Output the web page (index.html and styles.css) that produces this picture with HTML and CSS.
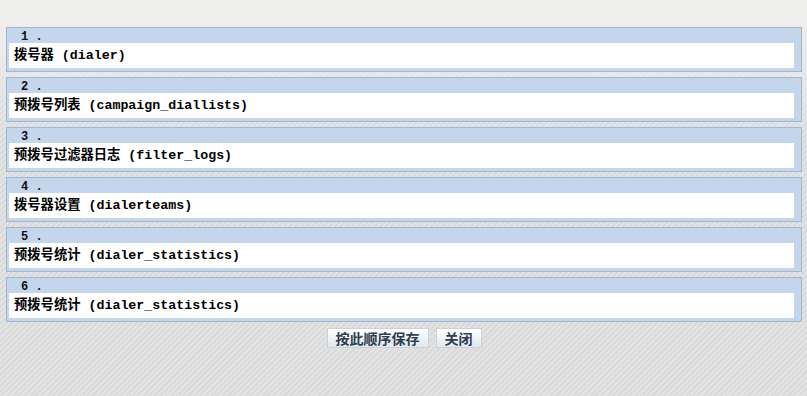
FILE: index.html
```html
<!DOCTYPE html>
<html lang="zh-CN">
  <head>
    <meta charset="UTF-8" />
    <title>排序</title>
    <link rel="stylesheet" href="styles.css">
  </head>
  <body>
    <div class="container">
      <div class="list">
        <div class="item">
          <div class="num">1 .</div>
          <div class="name">拨号器 (dialer)</div>
        </div>
        <div class="item">
          <div class="num">2 .</div>
          <div class="name">预拨号列表 (campaign_diallists)</div>
        </div>
        <div class="item">
          <div class="num">3 .</div>
          <div class="name">预拨号过滤器日志 (filter_logs)</div>
        </div>
        <div class="item">
          <div class="num">4 .</div>
          <div class="name">拨号器设置 (dialerteams)</div>
        </div>
        <div class="item">
          <div class="num">5 .</div>
          <div class="name">预拨号统计 (dialer_statistics)</div>
        </div>
        <div class="item">
          <div class="num">6 .</div>
          <div class="name">预拨号统计 (dialer_statistics)</div>
        </div>
      </div>
      <div class="actions">
        <button class="btn">按此顺序保存</button>
        <button class="btn">关闭</button>
      </div>
    </div>
  </body>
</html>
```

FILE: styles.css
```css
html {
  height: 100%;
}

body {
  margin: 0;
  min-height: 100%;
  font-family: "Liberation Mono", "Noto Sans CJK SC", monospace;
  background:
    linear-gradient(to bottom, #efefee 0, #efefee 20px, rgba(239, 239, 238, 0) 140px),
    repeating-linear-gradient(135deg, #dadada 0, #dadada 2px, #e3e3e3 2px, #e3e3e3 4px);
}

.container {
  padding: 27px 5px 0 6px;
}

.list {
  display: flex;
  flex-direction: column;
  gap: 5px;
}

.item {
  border: 1px solid #a3b6d0;
  background-color: #c4d6ec;
  padding: 0 7px 3px 2px;
}

.num {
  height: 15px;
  line-height: 19px;
  padding-left: 12px;
  font-size: 12px;
  font-weight: bold;
  color: #111;
}

.name {
  height: 25px;
  line-height: 26px;
  padding-left: 5px;
  background-color: #fff;
  font-size: 13.3px;
  font-weight: bold;
  color: #000;
  white-space: nowrap;
}

.actions {
  display: flex;
  justify-content: center;
  gap: 7px;
  margin-top: 6px;
}

.btn {
  height: 20px;
  padding: 0 8px;
  border: 1px solid #c6d2de;
  background: linear-gradient(to bottom, #ffffff, #dfe7ef);
  font-family: "Noto Sans CJK SC", sans-serif;
  font-size: 14px;
  font-weight: bold;
  line-height: 18px;
  color: #2f3d4d;
  cursor: pointer;
}
```
